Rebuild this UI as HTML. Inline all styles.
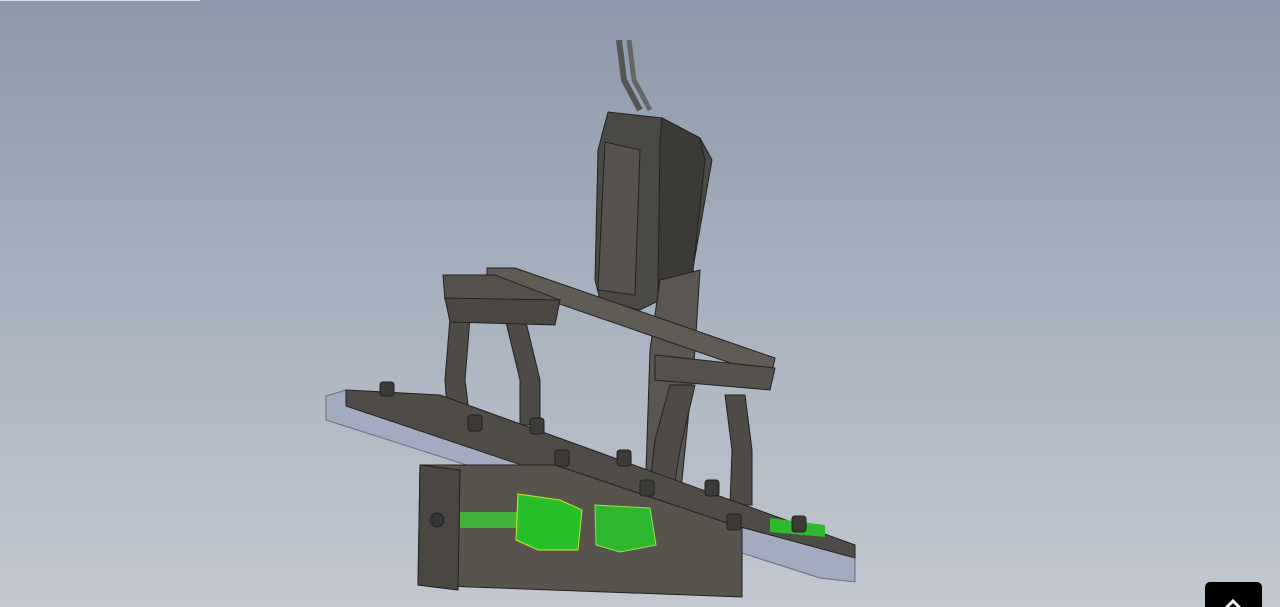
<!DOCTYPE html>
<html><head><style>
html,body{margin:0;padding:0;width:1280px;height:607px;overflow:hidden}
body{background:linear-gradient(180deg,#8c98a9 0%,#a5afbd 45%,#c3c8d0 100%);position:relative}
.btn{position:absolute;left:1205px;top:582px;width:57px;height:30px;background:#000;border-radius:5px}
</style></head><body>
<div style="position:absolute;left:0;top:0;width:200px;height:1px;background:#d8dce2"></div>
<svg width="1280" height="607" style="position:absolute;left:0;top:0" xmlns="http://www.w3.org/2000/svg">
<g stroke="#222" stroke-width="1">
<path d="M619 40 L624 80 L640 110" stroke="#555" stroke-width="6" fill="none"/>
<path d="M629 40 L634 80 L650 110" stroke="#666" stroke-width="5" fill="none"/>
<polygon points="608,112 662,118 700,138 712,160 690,285 660,300 640,310 600,300 595,280 598,150" fill="#4b4945"/>
<polygon points="662,118 700,138 705,160 692,280 658,290 660,140" fill="#3c3a37"/>
<polygon points="605,142 640,150 635,295 598,290" fill="#56534e"/>
<polygon points="660,280 700,270 695,350 680,500 645,500 650,350" fill="#5a5752"/>
<polygon points="487,268 515,268 775,358 772,372 745,368 487,279" fill="#5f5b55"/>
<polygon points="443,275 495,275 560,300 555,322 445,300" fill="#55524d"/>
<polygon points="450,318 470,318 465,380 470,420 448,420 445,380" fill="#4e4b47"/>
<polygon points="505,318 525,318 540,380 540,425 520,425 520,380" fill="#4e4b47"/>
<polygon points="445,298 560,300 555,325 450,322" fill="#4a4743"/>
<polygon points="655,355 775,368 770,390 655,380" fill="#55524d"/>
<polygon points="670,385 695,385 680,450 672,500 648,500 655,440" fill="#4e4b47"/>
<polygon points="725,395 745,395 752,450 752,505 730,505 732,450" fill="#4e4b47"/>
<polygon points="326,396 346,390 855,553 855,582 820,578 326,420" fill="#a3abc0" stroke="#6a6e7a"/>
<polygon points="346,390 440,395 855,545 855,558 560,478 346,406" fill="#4f4c47"/>
<polygon points="420,465 555,465 742,528 742,597 418,585" fill="#57544e"/>
<polygon points="420,465 460,470 458,590 418,585" fill="#4a4743"/>
<circle cx="437" cy="520" r="7" fill="#333"/>
<rect x="460" y="512" width="60" height="16" fill="#3fb23a" stroke="none"/>
<polygon points="518,494 560,500 582,510 578,550 538,550 516,540" fill="#28c028" stroke="#cfe030"/>
<polygon points="595,505 650,508 656,545 620,552 596,545" fill="#2eb82e" stroke="#9ae04a"/>
<polygon points="770,518 825,525 825,537 770,532" fill="#30b830" stroke="none"/>
<g fill="#3d3b38">
<rect x="380" y="382" width="14" height="14" rx="3"/><rect x="468" y="415" width="14" height="16" rx="3"/>
<rect x="530" y="418" width="14" height="16" rx="3"/><rect x="555" y="450" width="14" height="16" rx="3"/>
<rect x="617" y="450" width="14" height="16" rx="3"/><rect x="640" y="480" width="14" height="16" rx="3"/>
<rect x="705" y="480" width="14" height="16" rx="3"/><rect x="727" y="514" width="14" height="16" rx="3"/>
<rect x="792" y="516" width="14" height="16" rx="3"/>
</g>
</g>
</svg>
<div class="btn"><svg width="57" height="30"><path d="M21 26 L28 19 L35 26" stroke="#fff" stroke-width="3" fill="none"/></svg></div>
</body></html>
